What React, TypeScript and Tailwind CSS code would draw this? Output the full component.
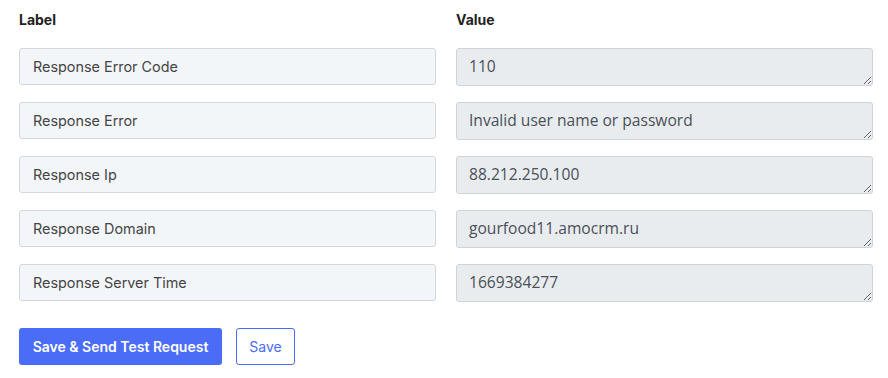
import React from "react";

const rows = [
  ["Response Error Code", "110"],
  ["Response Error", "Invalid user name or password"],
  ["Response Ip", "88.212.250.100"],
  ["Response Domain", "gourfood11.amocrm.ru"],
  ["Response Server Time", "1669384277"],
];

export default function App() {
  return (
    <div className="w-[888px] h-[378px] bg-white pl-[19px] pt-[10px] font-['Inter',sans-serif]">
      <div className="flex gap-[20px] h-[19px] items-center mt-[0px]">
        <div className="w-[417px] text-[14px] font-bold text-[#222]">Label</div>
        <div className="w-[417px] text-[14px] font-bold text-[#222]">Value</div>
      </div>
      <div className="flex flex-col gap-[16px] mt-[19px]">
        {rows.map(([l, v]) => (
          <div key={l} className="flex gap-[20px] items-start">
            <input
              readOnly
              value={l}
              className="w-[417px] h-[37px] rounded-[3px] border border-[#d3d8de] bg-[#f3f6f9] px-[13px] text-[14.4px] text-[#454545] font-['Inter',sans-serif] outline-none"
            />
            <textarea
              readOnly
              value={v}
              className="w-[417px] h-[38px] rounded-[3px] border border-[#ced4da] bg-[#e9ecef] px-[12px] pt-[5px] text-[15.6px] leading-[24px] text-[#495057] font-['Open_Sans',sans-serif] outline-none resize-y overflow-hidden"
            />
          </div>
        ))}
      </div>
      <div className="flex gap-[14px] mt-[26px]">
        <button className="h-[37px] w-[203px] rounded-[3px] bg-[#4a6cf7] text-white text-[14px] font-semibold">
          Save &amp; Send Test Request
        </button>
        <button className="h-[37px] w-[59px] rounded-[3px] border border-[#4a6cf7] bg-white text-[#4a6cf7] text-[14px]">
          Save
        </button>
      </div>
    </div>
  );
}
